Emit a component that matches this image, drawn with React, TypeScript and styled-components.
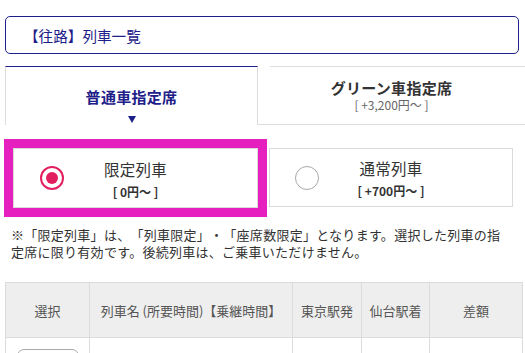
import React from "react";
import styled, { createGlobalStyle } from "styled-components";

const NAVY = "#1d2088";

const Global = createGlobalStyle`
  html, body { margin: 0; padding: 0; background: #fff; }
  body {
    font-family: "Noto Sans CJK JP", "Noto Sans", sans-serif;
    color: #333;
    overflow: hidden;
    text-spacing-trim: space-all;
  }
`;

const Page = styled.div`
  padding: 16px 0 0 5px;
  width: 520px;
`;

const TitleBox = styled.div`
  width: 514px;
  height: 38px;
  box-sizing: border-box;
  border: 1px solid ${NAVY};
  border-radius: 5px;
  display: flex;
  align-items: center;
  padding-left: 18px;
  font-size: 14.6px;
  color: ${NAVY};
`;

const Tabs = styled.div`
  display: flex;
  margin-top: 12px;
  width: 520px;
  height: 59px;
`;

const Tab = styled.div<{ $active?: boolean }>`
  box-sizing: border-box;
  display: flex;
  flex-direction: column;
  align-items: center;
  ${(p) =>
    p.$active
      ? `
    width: 253px;
    border-top: 1px solid ${NAVY};
    border-left: 1px solid #ddd;
    border-right: 1px solid #ddd;
    padding-top: 19px;
  `
      : `
    flex: 1;
    border-bottom: 1px solid #ddd;
    background: linear-gradient(#ddd, #ddd) no-repeat 12px 0 / calc(100% - 12px) 1px;
    padding-top: 12px;
  `}
`;

const TabTitle = styled.div<{ $active?: boolean }>`
  font-size: 15px;
  font-weight: 700;
  line-height: ${(p) => (p.$active ? "22px" : "20px")};
  color: ${(p) => (p.$active ? NAVY : "#333")};
  letter-spacing: 0.3px;
`;

const TabSub = styled.div`
  font-size: 12px;
  line-height: 14px;
  color: #666;
`;

const Arrow = styled.div`
  margin-top: 8px;
  width: 0;
  height: 0;
  border-left: 4px solid transparent;
  border-right: 4px solid transparent;
  border-top: 7px solid ${NAVY};
`;

const Options = styled.div`
  display: flex;
  gap: 11px;
  margin: 23px 0 0 8px;
  width: 500px;
`;

const Card = styled.label<{ $highlight?: boolean }>`
  box-sizing: border-box;
  width: ${(p) => (p.$highlight ? "245px" : "244px")};
  height: ${(p) => (p.$highlight ? "60px" : "59px")};
  border: 1px solid #dadada;
  background: #fff;
  display: grid;
  grid-template-columns: 1fr auto 1fr;
  align-items: center;
  ${(p) => (p.$highlight ? "outline: 9px solid #e620be;" : "")}
`;

const Radio = styled.span<{ $checked?: boolean }>`
  justify-self: start;
  margin-left: ${(p) => (p.$checked ? "26px" : "25px")};
  box-sizing: border-box;
  width: 24px;
  height: 24px;
  border-radius: 50%;
  border: ${(p) => (p.$checked ? "2.5px solid #e3205f" : "1px solid #a8a8a8")};
  display: flex;
  align-items: center;
  justify-content: center;
  &::after {
    content: "";
    display: ${(p) => (p.$checked ? "block" : "none")};
    width: 12px;
    height: 12px;
    border-radius: 50%;
    background: #e3205f;
  }
`;

const CardText = styled.div`
  display: flex;
  flex-direction: column;
  align-items: center;
  padding-top: 1px;
`;

const CardTitle = styled.div`
  font-size: 15.5px;
  line-height: 22px;
  color: #333;
  letter-spacing: 0.3px;
`;

const CardSub = styled.div`
  margin-top: 4px;
  font-size: 12px;
  font-weight: 700;
  line-height: 16px;
  color: #333;
`;

const Note = styled.p`
  margin: 19px 0 0 6px;
  width: 500px;
  font-size: 13px;
  line-height: 16.5px;
  letter-spacing: 0.27px;
  color: #333;
`;

const Table = styled.table`
  margin-top: 22px;
  width: 517px;
  border-collapse: collapse;
  table-layout: fixed;
`;

const Th = styled.th<{ $w: number }>`
  width: ${(p) => p.$w}px;
  height: 55px;
  box-sizing: border-box;
  background: #eee;
  border: 1px solid #dcdcdc;
  font-weight: 400;
  font-size: 13px;
  color: #555;
  padding: 0;
  white-space: nowrap;
`;

const Td = styled.td`
  border: 1px solid #dcdcdc;
  height: 40px;
  vertical-align: top;
  padding: 0;
`;

const SelectButton = styled.div`
  margin: 11px 0 0 11px;
  width: 62px;
  height: 30px;
  box-sizing: border-box;
  border: 1px solid #aaa;
  border-radius: 7px;
`;

export default function App() {
  return (
    <>
      <Global />
      <Page>
        <TitleBox>【往路】列車一覧</TitleBox>
        <Tabs>
          <Tab $active>
            <TabTitle $active>普通車指定席</TabTitle>
            <Arrow />
          </Tab>
          <Tab>
            <TabTitle>グリーン車指定席</TabTitle>
            <TabSub>[ +3,200円～ ]</TabSub>
          </Tab>
        </Tabs>
        <Options>
          <Card $highlight>
            <Radio $checked />
            <CardText>
              <CardTitle>限定列車</CardTitle>
              <CardSub>[ 0円～ ]</CardSub>
            </CardText>
            <span />
          </Card>
          <Card>
            <Radio />
            <CardText>
              <CardTitle>通常列車</CardTitle>
              <CardSub>[ +700円～ ]</CardSub>
            </CardText>
            <span />
          </Card>
        </Options>
        <Note>
          ※「限定列車」は、「列車限定」・「座席数限定」となります。選択した列車の指定席に限り有効です。後続列車は、ご乗車いただけません。
        </Note>
        <Table>
          <thead>
            <tr>
              <Th $w={84}>選択</Th>
              <Th $w={203}>列車名 (所要時間)【乗継時間】</Th>
              <Th $w={69}>東京駅発</Th>
              <Th $w={68}>仙台駅着</Th>
              <Th $w={93}>差額</Th>
            </tr>
          </thead>
          <tbody>
            <tr>
              <Td>
                <SelectButton />
              </Td>
              <Td />
              <Td />
              <Td />
              <Td />
            </tr>
          </tbody>
        </Table>
      </Page>
    </>
  );
}
